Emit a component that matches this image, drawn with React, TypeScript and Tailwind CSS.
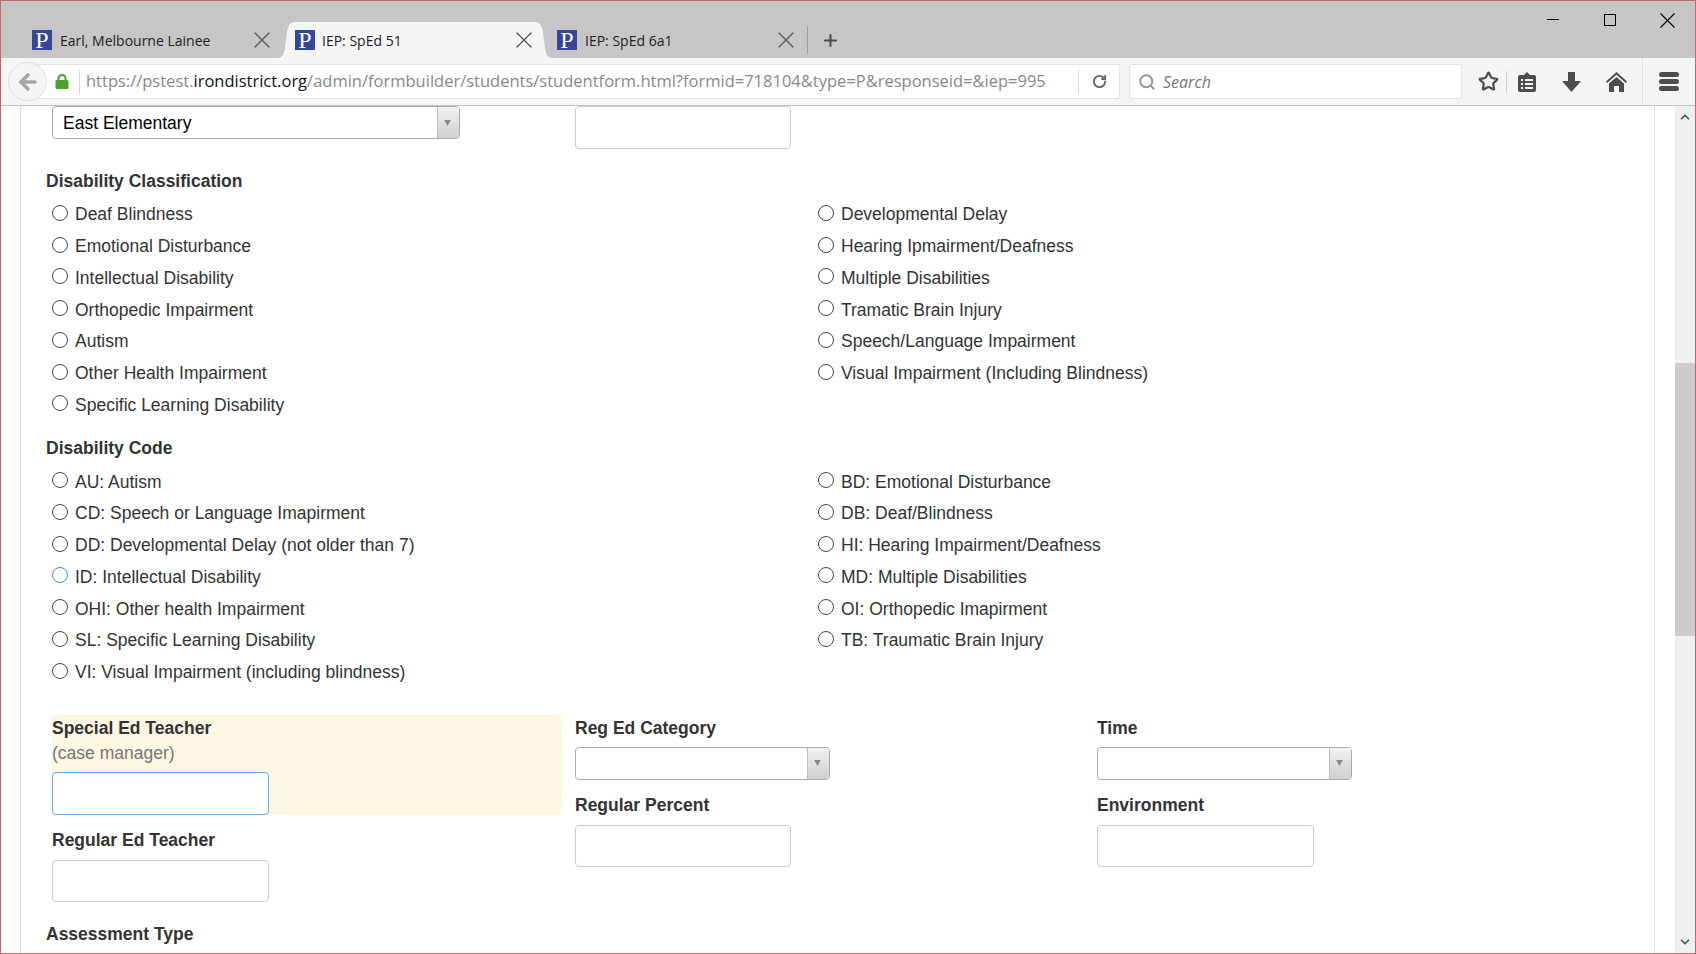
import { ArrowLeft, RotateCw, Search, Star, Plus, X, ChevronUp, ChevronDown } from 'lucide-react';

const classification = [
  'Deaf Blindness', 'Developmental Delay',
  'Emotional Disturbance', 'Hearing Ipmairment/Deafness',
  'Intellectual Disability', 'Multiple Disabilities',
  'Orthopedic Impairment', 'Tramatic Brain Injury',
  'Autism', 'Speech/Language Impairment',
  'Other Health Impairment', 'Visual Impairment (Including Blindness)',
  'Specific Learning Disability',
];

const codes = [
  'AU: Autism', 'BD: Emotional Disturbance',
  'CD: Speech or Language Imapirment', 'DB: Deaf/Blindness',
  'DD: Developmental Delay (not older than 7)', 'HI: Hearing Impairment/Deafness',
  'ID: Intellectual Disability', 'MD: Multiple Disabilities',
  'OHI: Other health Impairment', 'OI: Orthopedic Imapirment',
  'SL: Specific Learning Disability', 'TB: Traumatic Brain Injury',
  'VI: Visual Impairment (including blindness)',
];

function Favicon() {
  return (
    <span className="flex h-5 w-5 shrink-0 items-center justify-center bg-[#34459a] font-['Liberation_Serif',serif] text-[24px] leading-5 text-white">
      P
    </span>
  );
}

function Tab({ title, active, closeClass }: { title: string; active?: boolean; closeClass: string }) {
  if (active) {
    return (
      <div className="flex h-[36px] w-[276px] items-stretch">
        <svg width="18" height="36" viewBox="0 0 18 36" className="shrink-0">
          <path d="M0 36c5 0 7-3 8-10l2-16c1-6 3-10 8-10v36z" fill="#f5f5f5" />
        </svg>
        <div className="flex flex-1 items-center bg-[#f5f5f5]">
          <Favicon />
          <span className="ml-[7px] flex-1 font-['Open_Sans',sans-serif] text-[14px] text-[#222]">{title}</span>
          <X size={28} strokeWidth={1.1} className={`shrink-0 text-[#555] ${closeClass}`} />
        </div>
        <svg width="18" height="36" viewBox="0 0 18 36" className="shrink-0">
          <path d="M18 36c-5 0-7-3-8-10L8 10C7 4 5 0 0 0v36z" fill="#f5f5f5" />
        </svg>
      </div>
    );
  }
  return (
    <div className="flex h-[36px] items-center">
      <Favicon />
      <span className="ml-[8px] flex-1 font-['Open_Sans',sans-serif] text-[14px] text-[#222]">{title}</span>
      <X size={28} strokeWidth={1.1} className={`shrink-0 text-[#555] ${closeClass}`} />
    </div>
  );
}

function Radio({ label, focused }: { label: string; focused?: boolean }) {
  return (
    <label className="flex items-center pl-[6px]">
      <input
        type="radio"
        readOnly
        className={
          focused
            ? 'h-4 w-4 shrink-0 appearance-none rounded-full border border-[#3f8fdc] bg-white'
            : 'h-4 w-4 shrink-0 appearance-none rounded-full border border-[#444] bg-white'
        }
      />
      <span className="ml-[7px] pt-[3px]">{label}</span>
    </label>
  );
}

function SelectBox({ width, value }: { width: string; value?: string }) {
  return (
    <div className={`flex h-[33px] items-stretch rounded-[4px] border border-[#aaa] bg-white ${width}`}>
      <span className="flex-1 pl-[10px] leading-[33px] text-black">{value}</span>
      <span className="flex w-[22px] items-center justify-center rounded-r-[3px] border-l border-[#bbb] bg-gradient-to-b from-[#f2f2f2] to-[#cfcfcf]">
        <svg width="7" height="6" viewBox="0 0 8 7" className="-ml-[2px]">
          <path d="M0 0h8L4 7z" fill="#8a8a8a" />
        </svg>
      </span>
    </div>
  );
}

function TextBox({ focused, height = 'h-[42px]', width = 'w-[216px]' }: { focused?: boolean; height?: string; width?: string }) {
  return (
    <div
      className={
        focused
          ? `rounded-[4px] border border-[#62abee] bg-white ${width} ${height}`
          : `rounded-[4px] border border-[#ccc] bg-white ${width} ${height}`
      }
    />
  );
}

function RadioGroup({ items, focused }: { items: string[]; focused?: string }) {
  return (
    <div className="grid grid-cols-[766px_1fr] auto-rows-[31.75px] items-center">
      {items.map((item) => (
        <Radio key={item} label={item} focused={item === focused} />
      ))}
    </div>
  );
}

function Toolbar() {
  return (
    <div className="flex h-[48px] shrink-0 items-center border-b border-[#c2c2c2] bg-[#f5f5f5] pl-[7px]">
      <div className="z-10 -mr-[20px] flex h-[39px] w-[39px] shrink-0 items-center justify-center rounded-full border border-[#e0e0e0] bg-[#f5f5f5]">
        <ArrowLeft size={24} strokeWidth={3.6} className="text-[#a6a6a6]" />
      </div>
      <div className="flex h-[35px] w-[1093px] shrink-0 items-center rounded-r-[2px] border border-[#e3e3e3] bg-white pl-[27px]">
        <svg width="14" height="15" viewBox="0 0 14 15" className="shrink-0">
          <path d="M3.500 7V4.500a3.500 3.500 0 0 1 7 0V7" fill="none" stroke="#4f9f2c" strokeWidth="2" />
          <rect x="0.500" y="6" width="13" height="9" rx="1.500" fill="#4f9f2c" />
        </svg>
        <span className="ml-[10px] h-[24px] w-px shrink-0 bg-[#d8d8d8]" />
        <span className="ml-[6px] w-[992px] whitespace-nowrap font-['Open_Sans',sans-serif] text-[16.5px] text-[#888]">
          https://pstest.<span className="text-[#111]">irondistrict.org</span>
          /admin/formbuilder/students/studentform.html?formid=718104&amp;type=P&amp;responseid=&amp;iep=995
        </span>
        <span className="h-[24px] w-px shrink-0 bg-[#d8d8d8]" />
        <RotateCw size={15} strokeWidth={3} className="ml-[13px] shrink-0 text-[#666]" />
      </div>
      <div className="ml-[9px] flex h-[35px] w-[333px] shrink-0 items-center rounded-[2px] border border-[#e3e3e3] bg-white pl-[8px]">
        <Search size={18} strokeWidth={2.6} className="text-[#999]" />
        <span className="ml-[7px] font-['Open_Sans',sans-serif] text-[16px] italic text-[#777]">Search</span>
      </div>
      <div className="ml-[16px] flex h-full items-center text-[#4d4d4d]">
        <Star size={21} strokeWidth={2.6} />
        <span className="ml-[7px] h-[22px] w-px bg-[#d0d0d0]" />
        <svg width="18" height="20" viewBox="0 0 18 20" className="ml-[11px]">
          <path d="M2 3h4l3-3 3 3h4a2 2 0 0 1 2 2v13a2 2 0 0 1-2 2H2a2 2 0 0 1-2-2V5a2 2 0 0 1 2-2z" fill="#4d4d4d" />
          <path d="M3 7h2v2H3zM7 7h8v2H7zM3 11h2v2H3zM7 11h8v2H7zM3 15h2v2H3zM7 15h8v2H7z" fill="#f5f5f5" />
        </svg>
        <svg width="19" height="20" viewBox="0 0 19 20" className="ml-[26px]">
          <path d="M6 0h7v9h6l-9.500 11L0 9h6z" fill="#4d4d4d" />
        </svg>
        <svg width="21" height="20" viewBox="0 0 21 20" className="ml-[25px]">
          <path d="M10.500 0 21 9.500l-1.200 1.500-9.300-8.200L1.200 11 0 9.500z" fill="#4d4d4d" />
          <path d="M10.500 5 18 11.500V20h-5v-6H8v6H3v-8.500z" fill="#4d4d4d" />
        </svg>
        <span className="ml-[15px] h-[47px] w-px bg-[#e2e2e2]" />
        <div className="ml-[16px] flex flex-col gap-[2.500px]">
          <span className="h-[4.500px] w-[20px] rounded-full bg-[#4d4d4d]" />
          <span className="h-[4.500px] w-[20px] rounded-full bg-[#4d4d4d]" />
          <span className="h-[4.500px] w-[20px] rounded-full bg-[#4d4d4d]" />
        </div>
      </div>
    </div>
  );
}

export default function App() {
  return (
    <div className="flex h-[954px] w-[1696px] flex-col overflow-hidden border border-[#bf6b63] bg-white font-['Liberation_Sans',Arial,sans-serif] text-[17.5px] text-[#333]">
      <div className="flex h-[57px] shrink-0 bg-[#c6c6c6]">
        <div className="flex flex-1 items-end pl-[31px]">
          <div className="w-[245px]">
            <Tab title="Earl, Melbourne Lainee" closeClass="mr-[1px]" />
          </div>
          <Tab title="IEP: SpEd 51" active closeClass="-mr-[3px]" />
          <div className="ml-[4px] flex items-center">
            <div className="w-[250px]">
              <Tab title="IEP: SpEd 6a1" closeClass="mr-[7px]" />
            </div>
            <span className="h-[28px] w-px bg-[#9c9c9c]" />
            <Plus size={19} strokeWidth={2.6} className="ml-[13px] text-[#4d4d4d]" />
          </div>
        </div>
        <div className="flex pt-[12px] pr-[14.500px] text-black">
          <span className="mt-[6px] h-px w-[12px] bg-black" />
          <span className="ml-[45px] mt-px h-[12px] w-[12px] border border-black" />
          <X size={27} strokeWidth={1} className="ml-[37.500px] -mt-[6.500px]" />
        </div>
      </div>

      <Toolbar />

      <div className="flex min-h-0 flex-1">
        <main className="ml-[19px] w-[1635px] shrink-0 border-x border-[#dcdcdc] pl-[25px]">
          <div className="flex items-start">
            <div className="ml-[6px]">
              <SelectBox width="w-[408px]" value="East Elementary" />
            </div>
            <div className="ml-[115px]">
              <TextBox height="h-[43px]" />
            </div>
          </div>

          <h2 className="mt-[20px] leading-6 font-bold">Disability Classification</h2>
          <div className="mt-1">
            <RadioGroup items={classification} />
          </div>

          <h2 className="mt-[17px] leading-6 font-bold">Disability Code</h2>
          <div className="mt-[4px]">
            <RadioGroup items={codes} focused="ID: Intellectual Disability" />
          </div>

          <div className="mt-[28px] ml-[6px] flex items-start">
            <div className="w-[510px] shrink-0">
              <div className="h-[100px] bg-[#fdf6e3]">
                <div className="pt-[1px] leading-6 font-bold">Special Ed Teacher</div>
                <div className="mt-px leading-6 text-[#777]">(case manager)</div>
                <div className="mt-[7px]">
                  <TextBox focused height="h-[43px]" width="w-[217px]" />
                </div>
              </div>
              <div className="mt-[13px] leading-6 font-bold">Regular Ed Teacher</div>
              <div className="mt-[8px]">
                <TextBox width="w-[217px]" />
              </div>
            </div>

            <div className="ml-[13px] w-[522px] shrink-0">
              <div className="pt-[1px] leading-6 font-bold">Reg Ed Category</div>
              <div className="mt-[7px]">
                <SelectBox width="w-[255px]" />
              </div>
              <div className="mt-[13px] leading-6 font-bold">Regular Percent</div>
              <div className="mt-[8px]">
                <TextBox />
              </div>
            </div>

            <div className="shrink-0">
              <div className="pt-[1px] leading-6 font-bold">Time</div>
              <div className="mt-[7px]">
                <SelectBox width="w-[255px]" />
              </div>
              <div className="mt-[13px] leading-6 font-bold">Environment</div>
              <div className="mt-[8px]">
                <TextBox width="w-[217px]" />
              </div>
            </div>
          </div>

          <h2 className="mt-[20px] leading-6 font-bold">Assessment Type</h2>
        </main>

        <div className="ml-auto flex w-[20px] shrink-0 flex-col items-center bg-[#f0f0f0]">
          <ChevronUp size={14} strokeWidth={3} className="mt-[4px] shrink-0 text-[#555]" />
          <div className="mt-[239px] h-[273px] w-full shrink-0 bg-[#cdcdcd]" />
          <ChevronDown size={14} strokeWidth={3} className="mt-auto mb-[4px] shrink-0 text-[#555]" />
        </div>
      </div>
    </div>
  );
}
